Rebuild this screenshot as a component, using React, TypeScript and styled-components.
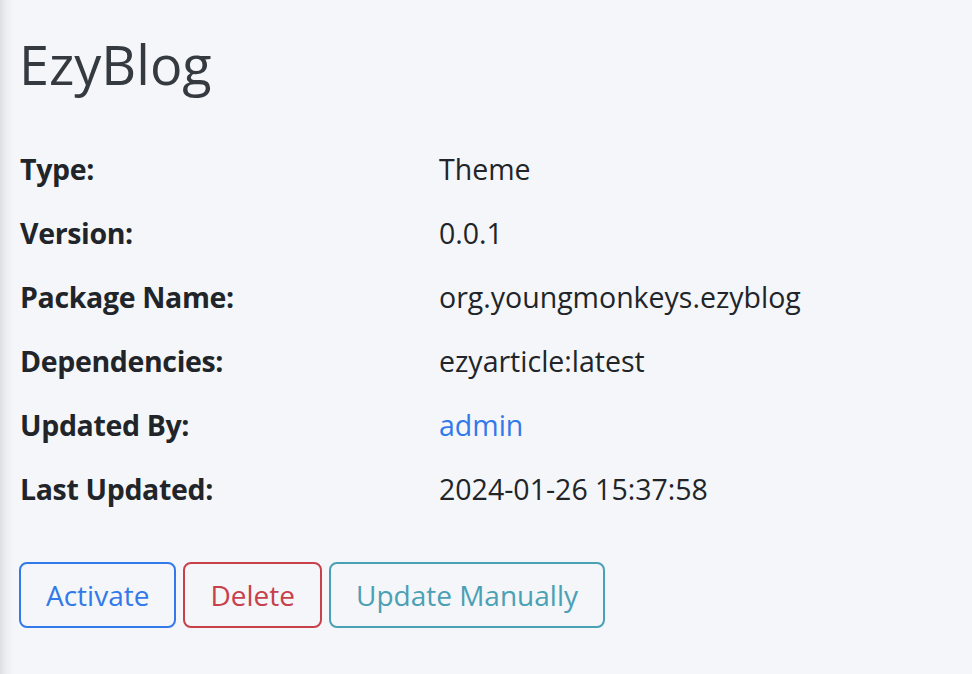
import React from "react";
import styled, { createGlobalStyle } from "styled-components";

const GlobalStyle = createGlobalStyle`
  html, body {
    margin: 0;
    padding: 0;
    background: #f4f6f9;
  }
  body {
    font-family: "Open Sans", "Noto Sans", sans-serif;
    color: #212529;
  }
  * { box-sizing: border-box; }
`;

const Page = styled.div`
  min-height: 674px;
  width: 972px;
  padding: 32px 20px 0 20px;
  background: linear-gradient(to right, #dcdee2 0px, #eceef2 6px, #f4f6f9 14px);
`;

const Title = styled.h2`
  margin: 0 0 51px 0;
  font-size: 54px;
  line-height: 64.8px;
  font-weight: 400;
  color: #343a40;
  margin-left: -1px;
`;

const InfoList = styled.dl`
  display: grid;
  grid-template-columns: 419px 1fr;
  row-gap: 22px;
  margin: 0;
`;

const Label = styled.dt`
  font-size: 28.5px;
  line-height: 42px;
  font-weight: 700;
  letter-spacing: -0.35px;
  color: #212529;
  margin: 0;
`;

const Value = styled.dd`
  font-size: 28.5px;
  line-height: 42px;
  font-weight: 400;
  color: #212529;
  margin: 0;
`;

const Link = styled.a`
  color: #3279ea;
  text-decoration: none;
`;

const Actions = styled.div`
  display: flex;
  gap: 7px;
  margin-top: 52px;
  margin-left: -1px;
`;

const OutlineButton = styled.button<{ $color: string }>`
  font-family: "Open Sans", "Noto Sans", sans-serif;
  font-size: 28px;
  line-height: 42px;
  height: 66px;
  padding: 10px 25px;
  border: 2px solid ${(p) => p.$color};
  border-radius: 8px;
  color: ${(p) => p.$color};
  background: transparent;
  cursor: pointer;
`;

const rows: { label: string; value: React.ReactNode }[] = [
  { label: "Type:", value: "Theme" },
  { label: "Version:", value: "0.0.1" },
  { label: "Package Name:", value: "org.youngmonkeys.ezyblog" },
  { label: "Dependencies:", value: "ezyarticle:latest" },
  { label: "Updated By:", value: <Link href="#">admin</Link> },
  { label: "Last Updated:", value: "2024-01-26 15:37:58" },
];

export default function App() {
  return (
    <>
      <GlobalStyle />
      <Page>
        <Title>EzyBlog</Title>
        <InfoList>
          {rows.map((r) => (
            <React.Fragment key={r.label}>
              <Label>{r.label}</Label>
              <Value>{r.value}</Value>
            </React.Fragment>
          ))}
        </InfoList>
        <Actions>
          <OutlineButton $color="#3279ea">Activate</OutlineButton>
          <OutlineButton $color="#c8404a">Delete</OutlineButton>
          <OutlineButton $color="#4aa0b5">Update Manually</OutlineButton>
        </Actions>
      </Page>
    </>
  );
}
